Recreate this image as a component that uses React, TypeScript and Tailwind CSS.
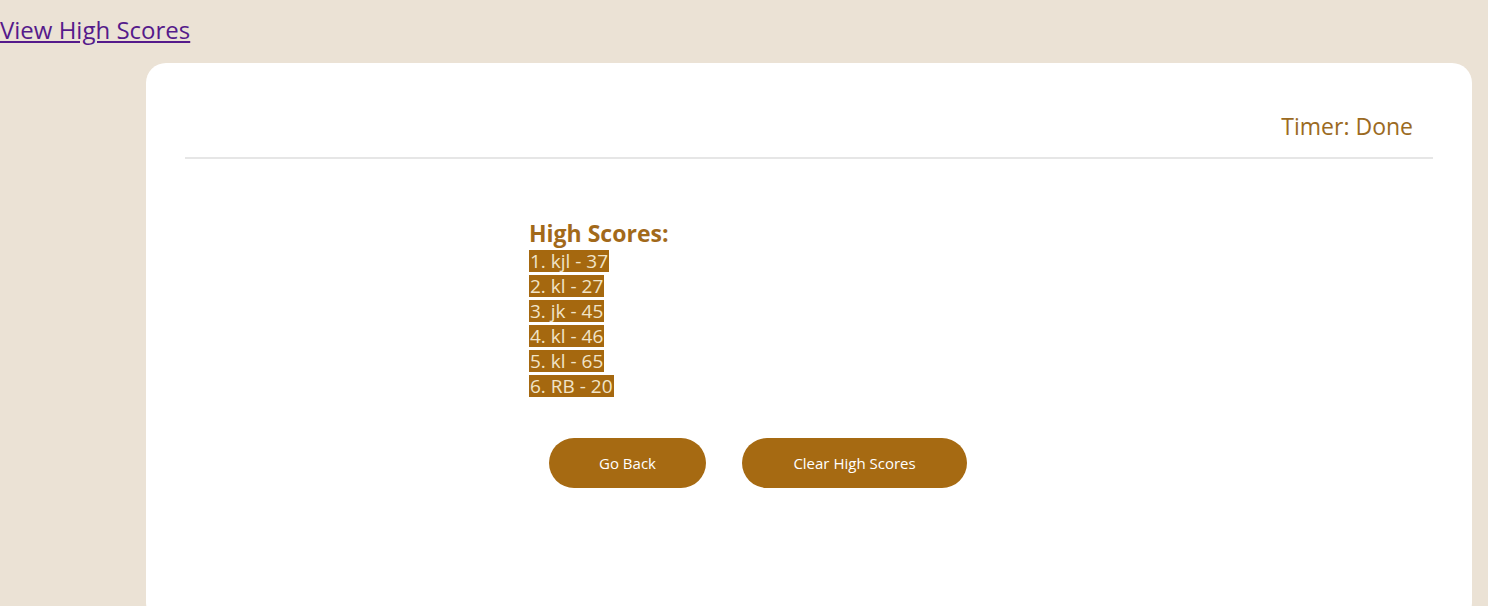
export default function App() {
  const scores = ['1. kjl - 37', '2. kl - 27', '3. jk - 45', '4. kl - 46', '5. kl - 65', '6. RB - 20']
  return (
    <div className="min-h-[606px] bg-[#ebe2d5] font-['Open_Sans',sans-serif] overflow-hidden">
      {/* Top link */}
      <a href="#" className="inline-block pt-[14px] text-[24px] leading-[32px] text-[#551a8b] underline">
        View High Scores
      </a>

      {/* Card */}
      <div className="ml-[146px] mr-[16px] mt-[17px] h-[560px] rounded-[20px] bg-white px-[39px] pt-[46px]">
        <div className="flex justify-end pr-[20px] border-b-2 border-[#e6e6e6] pb-[14px]">
          <span className="text-[23px] leading-[34px] text-[#9b6a22]">Timer: Done</span>
        </div>

        <div className="ml-[344px] mt-[61px]">
          <h2 className="mb-[4px] text-[23px] font-bold leading-[26px] text-[#a2691a]">High Scores:</h2>
          <ul className="flex flex-col items-start">
            {scores.map((s, i) => (
              <li key={i} className="bg-[#a5680f] px-[1px] text-[19px] font-medium leading-[22px] mb-[3px] text-[#f1e4c8]">
                {s}
              </li>
            ))}
          </ul>

          <div className="mt-[38px] ml-[20px] flex gap-[36px]">
            <button className="h-[50px] w-[157px] rounded-full bg-[#a66a12] text-[15px] font-medium text-white">Go Back</button>
            <button className="h-[50px] w-[225px] rounded-full bg-[#a66a12] text-[15px] font-medium text-white">Clear High Scores</button>
          </div>
        </div>
      </div>
    </div>
  )
}
